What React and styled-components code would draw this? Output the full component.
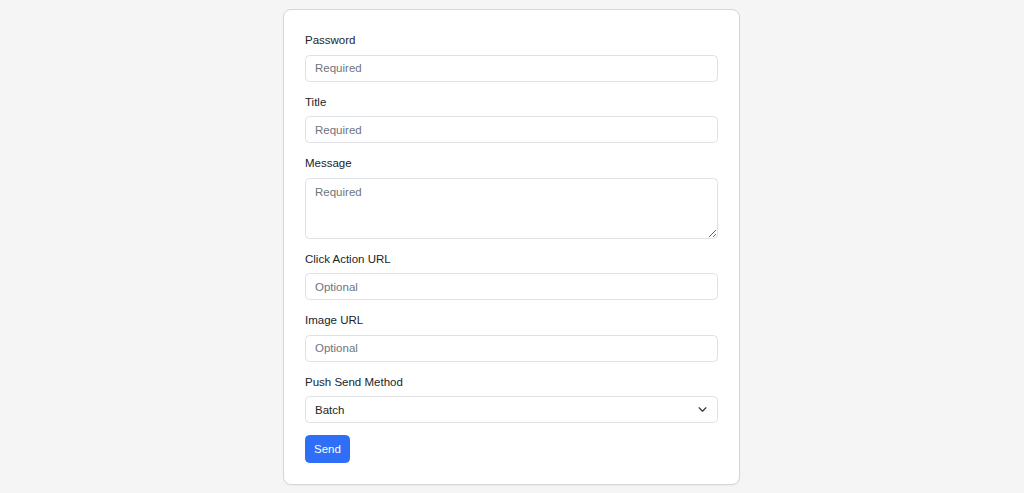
import React, { useState } from 'react'
import styled, { createGlobalStyle } from 'styled-components'

const GlobalStyle = createGlobalStyle`
  * { box-sizing: border-box; }
  body {
    margin: 0;
    background: #f5f5f5;
    font-family: "Liberation Sans", Arial, sans-serif;
    color: #212529;
  }
`

const Page = styled.div`
  display: flex;
  justify-content: center;
  align-items: flex-start;
  padding: 9px 0 0 1px;
  min-height: 493px;
`

const Card = styled.form`
  width: 457px;
  margin-right: 2px;
  background: #fff;
  border: 1px solid #d6d6d6;
  border-radius: 8px;
  padding: 22px 21px 21px 21px;
  box-shadow: 0 1px 2px rgba(0, 0, 0, 0.04);
`

const Field = styled.div`
  display: flex;
  flex-direction: column;
  margin-bottom: 12px;
`

const Label = styled.label`
  font-size: 11.5px;
  line-height: 17px;
  margin-bottom: 5.5px;
  color: #212529;
`

const Input = styled.input`
  height: 27px;
  width: 100%;
  padding: 0 9px;
  font-family: inherit;
  font-size: 11.5px;
  color: #212529;
  background: #fff;
  border: 1px solid #dee2e6;
  border-radius: 4.5px;
  outline: none;
  &::placeholder { color: #6c757d; }
`

const TextArea = styled.textarea`
  height: 61px;
  width: 100%;
  padding: 5px 9px;
  font-family: inherit;
  font-size: 11.5px;
  line-height: 17px;
  color: #212529;
  border: 1px solid #dee2e6;
  border-radius: 4.5px;
  outline: none;
  resize: vertical;
  display: block;
  &::placeholder { color: #6c757d; }
`

const SelectWrap = styled.div`
  position: relative;
`

const Select = styled.select`
  appearance: none;
  height: 27px;
  width: 100%;
  padding: 0 28px 0 9px;
  font-family: inherit;
  font-size: 11.5px;
  color: #212529;
  background: #fff;
  border: 1px solid #dee2e6;
  border-radius: 4.5px;
  outline: none;
`

const Chevron = styled.svg`
  position: absolute;
  right: 11px;
  top: 9px;
  pointer-events: none;
`

const Button = styled.button`
  height: 28px;
  padding: 0 8px;
  font-family: inherit;
  font-size: 11.5px;
  color: #fff;
  background: #2f6ef6;
  border: 1px solid #2f6ef6;
  border-radius: 4.5px;
  cursor: pointer;
  display: block;
`

const App = () => {
  const [method, setMethod] = useState('batch')

  return (
    <>
      <GlobalStyle />
      <Page>
        <Card onSubmit={(e) => e.preventDefault()}>
          <Field>
            <Label>Password</Label>
            <Input type="password" placeholder="Required" />
          </Field>
          <Field>
            <Label>Title</Label>
            <Input type="text" placeholder="Required" />
          </Field>
          <Field>
            <Label>Message</Label>
            <TextArea placeholder="Required" />
          </Field>
          <Field>
            <Label>Click Action URL</Label>
            <Input type="text" placeholder="Optional" />
          </Field>
          <Field>
            <Label>Image URL</Label>
            <Input type="text" placeholder="Optional" />
          </Field>
          <Field>
            <Label>Push Send Method</Label>
            <SelectWrap>
              <Select value={method} onChange={(e) => setMethod(e.target.value)}>
                <option value="batch">Batch</option>
                <option value="single">Single</option>
              </Select>
              <Chevron width="9" height="9" viewBox="0 0 16 16">
                <path d="m2 5 6 6 6-6" fill="none" stroke="#343a40" strokeWidth="2.2" strokeLinecap="round" strokeLinejoin="round" />
              </Chevron>
            </SelectWrap>
          </Field>
          <Button type="submit">Send</Button>
        </Card>
      </Page>
    </>
  )
}

export default App
